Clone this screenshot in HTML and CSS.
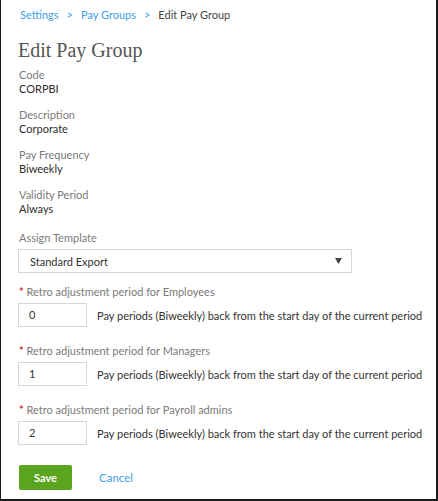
FILE: index.html
```html
<!DOCTYPE html>
<html>
<head>
<meta charset="utf-8">
<link rel="stylesheet" href="styles.css">
</head>
<body>
<div class="frame">
  <nav class="crumbs">
    <a class="crumb-link" href="#">Settings</a>
    <span class="sep">&gt;</span>
    <a class="crumb-link" href="#">Pay Groups</a>
    <span class="sep">&gt;</span>
    <span class="crumb-current">Edit Pay Group</span>
  </nav>
  <h1 class="title">Edit Pay Group</h1>

  <div class="field">
    <div class="label">Code</div>
    <div class="value">CORPBI</div>
  </div>
  <div class="field">
    <div class="label">Description</div>
    <div class="value">Corporate</div>
  </div>
  <div class="field">
    <div class="label">Pay Frequency</div>
    <div class="value">Biweekly</div>
  </div>
  <div class="field">
    <div class="label">Validity Period</div>
    <div class="value">Always</div>
  </div>

  <div class="template">
    <div class="label">Assign Template</div>
    <div class="select">
      <span>Standard Export</span>
      <svg class="caret" width="7" height="6" viewBox="0 0 7 6"><path d="M0 0H7L3.5 6Z" fill="#444"/></svg>
    </div>
  </div>

  <div class="retro first">
    <div class="label"><span class="req">*</span> Retro adjustment period for Employees</div>
    <div class="retro-row">
      <div class="num">0</div>
      <span class="hint">Pay periods (Biweekly) back from the start day of the current period</span>
    </div>
  </div>
  <div class="retro">
    <div class="label"><span class="req">*</span> Retro adjustment period for Managers</div>
    <div class="retro-row">
      <div class="num">1</div>
      <span class="hint">Pay periods (Biweekly) back from the start day of the current period</span>
    </div>
  </div>
  <div class="retro">
    <div class="label"><span class="req">*</span> Retro adjustment period for Payroll admins</div>
    <div class="retro-row">
      <div class="num">2</div>
      <span class="hint">Pay periods (Biweekly) back from the start day of the current period</span>
    </div>
  </div>

  <div class="actions">
    <button class="save">Save</button>
    <a class="cancel" href="#">Cancel</a>
  </div>
</div>
</body>
</html>
```
FILE: styles.css
```css
* { box-sizing: border-box; }
html, body { margin: 0; padding: 0; background: #fff; }
.frame {
  width: 438px;
  height: 501px;
  border-left: 1px solid #1a1a1a;
  border-right: 2px solid #1a1a1a;
  border-bottom: 2px solid #1a1a1a;
  padding: 8px 0 0 17px;
  font-family: Lato, "Liberation Sans", sans-serif;
  font-size: 11px;
  color: #333;
}
.crumbs {
  height: 14px;
  line-height: 14px;
  font-size: 11px;
  display: flex;
  gap: 8px;
  padding-left: 2px;
  white-space: nowrap;
}
.crumb-link { color: #3ea0ea; text-decoration: none; }
.sep { color: #3ea0ea; }
.crumb-current { color: #444; }
.title {
  margin: 16px 0 0;
  font-family: "Liberation Serif", serif;
  font-weight: normal;
  font-size: 20px;
  line-height: 24px;
  color: #555;
  padding-left: 0;
}
.field { margin-top: 6px; padding-left: 1px; }
.field + .field { margin-top: 12px; }
.label { line-height: 14px; color: #7a7a7a; white-space: nowrap; }
.value { line-height: 14px; color: #2e2e2e; }
.template { margin-top: 15px; }
.template .label { padding-left: 1px; }
.select {
  margin-top: 4px;
  width: 334px;
  height: 24px;
  border: 1px solid #d6d6d6;
  display: flex;
  align-items: center;
  justify-content: space-between;
  padding: 0 9px 0 11px;
  color: #333;
}
.retro { margin-top: 17px; }
.retro.first { margin-top: 12px; }
.retro .label { padding-left: 1px; }
.req { color: #d0312d; font-weight: bold; }
.retro-row {
  margin-top: 4px;
  display: flex;
  align-items: center;
  gap: 10px;
}
.num {
  flex: none;
  width: 69px;
  height: 24px;
  border: 1px solid #d6d6d6;
  line-height: 22px;
  padding-left: 10px;
  color: #333;
}
.hint { color: #333; white-space: nowrap; }
.actions {
  margin-top: 20px;
  display: flex;
  align-items: center;
  gap: 27px;
  padding-left: 1px;
}
.save {
  width: 53px;
  height: 25px;
  border: none;
  border-radius: 2px;
  background: #5aa51d;
  color: #fff;
  font-family: Lato, "Liberation Sans", sans-serif;
  font-weight: bold;
  font-size: 11px;
  padding: 0;
}
.cancel { color: #3ea0ea; text-decoration: none; font-size: 11.5px; }
```
